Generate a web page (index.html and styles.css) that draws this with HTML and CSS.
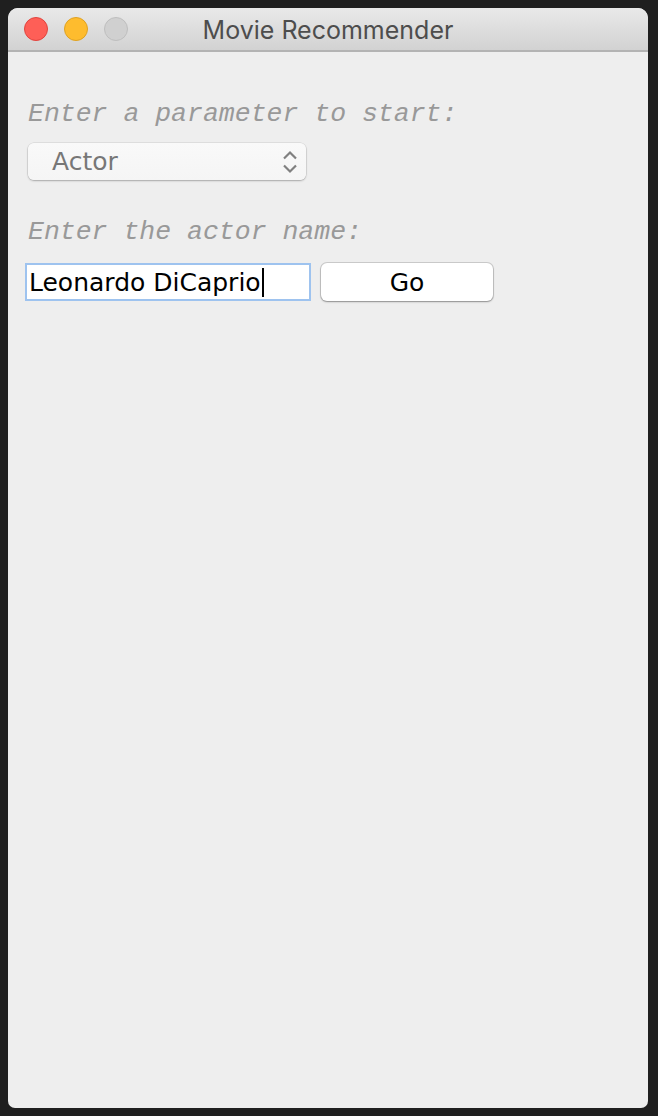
FILE: index.html
```html
<!DOCTYPE html>
<html>
<head>
<meta charset="utf-8">
<title>Movie Recommender</title>
<link rel="stylesheet" href="styles.css">
</head>
<body>
<div class="window">
  <div class="titlebar">
    <div class="lights">
      <span class="light red"></span>
      <span class="light yellow"></span>
      <span class="light grey"></span>
    </div>
    <div class="title">Movie Recommender</div>
  </div>
  <div class="content">
    <div class="label first">Enter a parameter to start:</div>
    <div class="combo">
      <span class="combo-text">Actor</span>
      <svg class="chev" width="16" height="24" viewBox="0 0 16 24">
        <polyline points="2,8.5 8,2.5 14,8.5" fill="none" stroke="#808080" stroke-width="2.2"/>
        <polyline points="2,15.5 8,21.5 14,15.5" fill="none" stroke="#808080" stroke-width="2.2"/>
      </svg>
    </div>
    <div class="label second">Enter the actor name:</div>
    <div class="row">
      <div class="field"><span class="field-text">Leonardo DiCaprio</span><span class="caret"></span></div>
      <div class="button">Go</div>
    </div>
  </div>
</div>
</body>
</html>
```
FILE: styles.css
```css
html, body {
  margin: 0;
  padding: 0;
}
body {
  background: #1f1f1f;
  width: 658px;
  height: 1116px;
  padding: 8px;
  box-sizing: border-box;
  overflow: hidden;
}
.window {
  width: 640px;
  height: 1100px;
  background: #eeeeee;
  border-radius: 10px 10px 7px 7px;
  overflow: hidden;
  display: flex;
  flex-direction: column;
}
.titlebar {
  height: 42px;
  flex: none;
  background: linear-gradient(#e9e9e9, #d2d2d2);
  border-bottom: 2px solid #b3b3b3;
  position: relative;
  display: flex;
  align-items: center;
}
.lights {
  display: flex;
  gap: 16px;
  padding-left: 16px;
  position: relative;
  z-index: 1;
}
.light {
  width: 22px;
  height: 22px;
  border-radius: 50%;
  display: block;
}
.red { background: #fe5f57; border: 1px solid #e0443e; }
.yellow { background: #febc2e; border: 1px solid #dea123; }
.grey { background: #d0d0d0; border: 1px solid #bebebe; }
.title {
  position: absolute;
  left: 0;
  right: 0;
  top: 0;
  bottom: 0;
  text-align: center;
  line-height: 44px;
  font-family: "Inter", "Liberation Sans", sans-serif;
  font-size: 25px;
  color: #4d4d4d;
}
.content {
  padding: 0 17px;
  display: flex;
  flex-direction: column;
}
.label {
  font-family: "Liberation Mono", monospace;
  font-style: italic;
  font-size: 26.5px;
  color: #999999;
  line-height: 30px;
  padding-left: 3px;
}
.label.first { margin-top: 47px; }
.label.second { margin-top: 37px; }
.combo {
  margin-top: 14px;
  margin-left: 3px;
  width: 278px;
  height: 37px;
  background: linear-gradient(#f9f9f9, #f5f5f5);
  border-radius: 6px;
  box-shadow: 0 0 0 0.5px rgba(0,0,0,0.12), 0 1px 2px rgba(0,0,0,0.25);
  display: flex;
  align-items: center;
  justify-content: space-between;
  box-sizing: border-box;
  padding: 0 8px 0 24px;
}
.combo-text {
  font-family: "DejaVu Sans", sans-serif;
  font-size: 25px;
  color: #777777;
}
.chev { display: block; }
.row {
  margin-top: 16px;
  display: flex;
  align-items: center;
  gap: 10px;
}
.field {
  width: 286px;
  height: 38px;
  box-sizing: border-box;
  background: #ffffff;
  border: 2px solid #9ec3ef;
  display: flex;
  align-items: center;
  padding-left: 2px;
}
.field-text {
  font-family: "DejaVu Sans", sans-serif;
  font-size: 25px;
  color: #000000;
}
.caret {
  width: 2px;
  height: 29px;
  background: #000;
  margin-left: 1px;
}
.button {
  width: 172px;
  height: 38px;
  box-sizing: border-box;
  background: #ffffff;
  border-radius: 6px;
  box-shadow: 0 0 0 1px rgba(0,0,0,0.14), 0 1px 2px rgba(0,0,0,0.3);
  font-family: "DejaVu Sans", sans-serif;
  font-size: 25px;
  color: #000;
  display: flex;
  align-items: center;
  justify-content: center;
}
```
